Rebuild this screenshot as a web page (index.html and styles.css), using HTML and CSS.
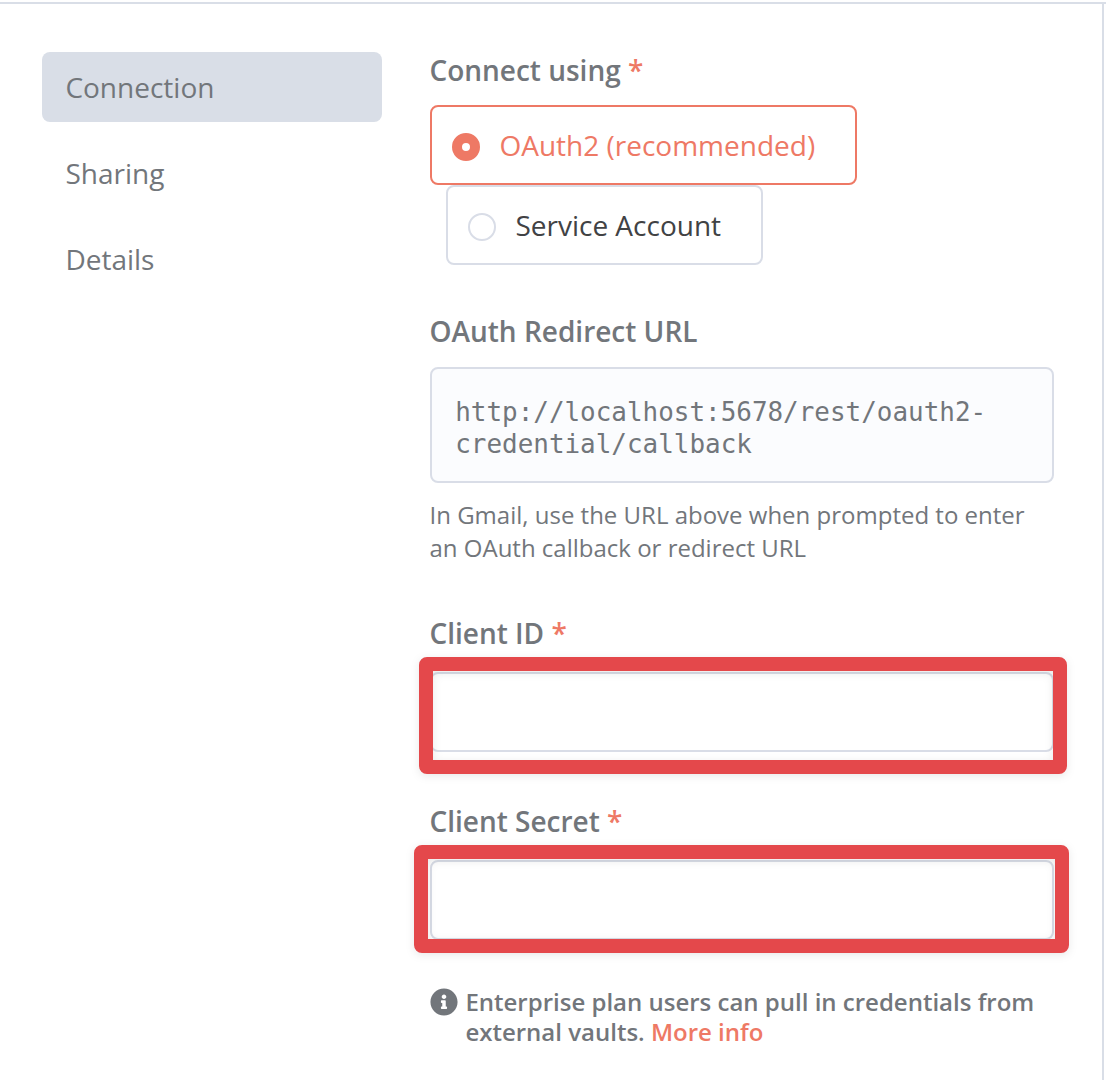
FILE: index.html
```html
<!DOCTYPE html>
<html lang="en">
<head>
<meta charset="utf-8">
<title>Gmail credential</title>
<link rel="stylesheet" href="styles.css">
</head>
<body>
<div class="modal">
  <nav class="menu">
    <a class="menu-item active">Connection</a>
    <a class="menu-item">Sharing</a>
    <a class="menu-item">Details</a>
  </nav>
  <main class="content">
    <section class="field">
      <h2 class="label">Connect using <span class="required">*</span></h2>
      <div class="radio selected"><span class="dot"></span><span class="radio-text">OAuth2 (recommended)</span></div>
      <div class="radio secondary"><span class="dot"></span><span class="radio-text account">Service Account</span></div>
    </section>
    <section class="field redirect">
      <h2 class="label">OAuth Redirect URL</h2>
      <div class="url">http://localhost:5678/rest/oauth2-<br>credential/callback</div>
      <p class="hint">In Gmail, use the URL above when prompted to enter<br>an OAuth callback or redirect URL</p>
    </section>
    <section class="field client-id">
      <h2 class="label">Client ID <span class="required">*</span></h2>
      <div class="control"><div class="input"></div><div class="frame frame-id"></div></div>
    </section>
    <section class="field client-secret">
      <h2 class="label">Client Secret <span class="required">*</span></h2>
      <div class="control"><div class="input"></div><div class="frame frame-secret"></div></div>
    </section>
    <div class="note">
      <svg class="info" viewBox="0 0 512 512"><path fill="currentColor" d="M256 8C119 8 8 119 8 256s111 248 248 248 248-111 248-248S393 8 256 8zm0 110c23.200 0 42 18.800 42 42s-18.800 42-42 42-42-18.800-42-42 18.800-42 42-42zm56 254c0 6.600-5.400 12-12 12h-88c-6.600 0-12-5.400-12-12v-24c0-6.600 5.400-12 12-12h12v-64h-12c-6.600 0-12-5.400-12-12v-24c0-6.600 5.400-12 12-12h64c6.600 0 12 5.400 12 12v100h12c6.600 0 12 5.400 12 12v24z"/></svg>
      <p class="note-text">Enterprise plan users can pull in credentials from<br>external vaults. <a class="link">More info</a></p>
    </div>
  </main>
</div>
</body>
</html>
```
FILE: styles.css
```css
* { box-sizing: border-box; }
body {
  margin: 0;
  padding-top: 2px;
  height: 1080px;
  overflow: hidden;
  background: #fff;
  color: #72767b;
  font: 28px/38px "Open Sans", sans-serif;
}
h2, p { margin: 0; }
.modal {
  display: flex;
  gap: 48px;
  height: 1078px;
  padding: 48px 0 0 42px;
  border-top: 2px solid #d9dee7;
  background: linear-gradient(#d9dee7, #d9dee7) 1102px 0 / 2px 100% no-repeat;
}
.menu { display: flex; flex-direction: column; gap: 16px; width: 340px; }
.menu-item { height: 70px; padding: 16px 23.4px; border-radius: 8px; }
.active { background: #d9dee7; }
.content { width: 624px; margin-top: -1px; }
.label {
  margin-left: -0.6px;
  font-size: 28px;
  font-weight: 600;
  white-space: nowrap;
}
.required, .link { color: #ee7965; }
.radio {
  display: flex;
  align-items: center;
  gap: 19.4px;
  width: 427px;
  height: 80px;
  padding: 0 20px;
  border: 2px solid #d9dde7;
  border-radius: 8px;
  margin-top: 16px;
  white-space: nowrap;
}
.dot {
  flex: none;
  width: 28px;
  height: 28px;
  margin-top: 3px;
  border: 2px solid #d9dde7;
  border-radius: 50%;
}
.selected { border-color: #ee7965; color: #ee7965; }
.selected .dot { border: 10px solid #ee7965; }
.secondary { width: 317px; margin: 0 0 0 16px; }
.account { color: #414244; }
.redirect { margin-top: 47px; }
.url {
  height: 116px;
  margin-top: 17px;
  padding: 27px 23.2px;
  border: 2px solid #d9dde7;
  border-radius: 8px;
  background: #fbfcfe;
  font: 25.94px/32px "DejaVu Sans Mono", monospace;
  white-space: nowrap;
}
.hint {
  margin: 15px 0 0 -0.5px;
  font-size: 24px;
  line-height: 33px;
  white-space: nowrap;
}
.client-id, .client-secret { margin-top: 50px; }
.control { position: relative; margin-top: 20px; }
.input { height: 80px; border: 2px solid #d9dde7; border-radius: 8px; }
.frame {
  position: absolute;
  border: 14px solid #e4484b;
  border-radius: 8px;
  filter: drop-shadow(0 2px 4px rgba(0, 0, 0, .09));
}
.frame-id { left: -11px; top: -15px; width: 648px; height: 117px; }
.frame-secret { left: -16px; top: -15px; width: 655px; height: 108px; }
.note {
  display: flex;
  gap: 7.4px;
  margin-top: 47px;
  font-size: 24px;
  font-weight: 600;
  line-height: 30px;
  white-space: nowrap;
}
.info { flex: none; width: 28px; height: 28px; margin-top: 1px; }
```
